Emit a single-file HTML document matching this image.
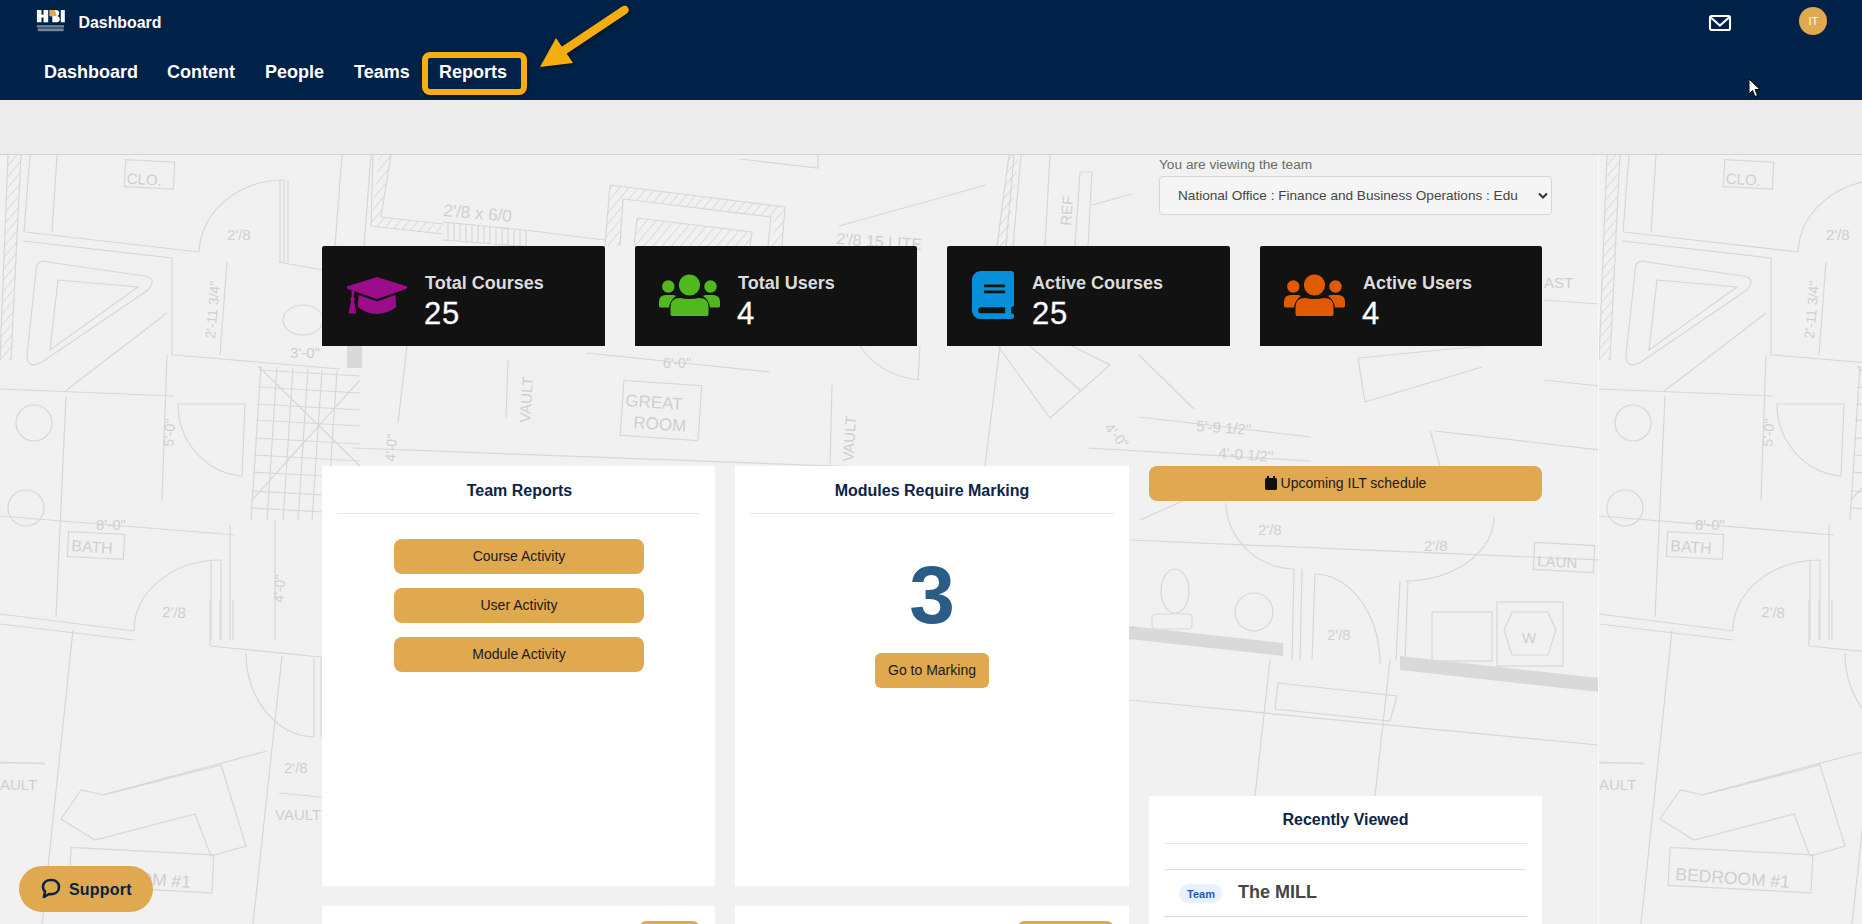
<!DOCTYPE html>
<html><head><meta charset="utf-8">
<style>
*{box-sizing:border-box;margin:0;padding:0}
html,body{width:1862px;height:924px;overflow:hidden}
body{font-family:"Liberation Sans",sans-serif;background:#f1f1f1;position:relative}
.abs{position:absolute}
#nav{left:0;top:0;width:1862px;height:100px;background:#012248}
#band{left:0;top:100px;width:1862px;height:55px;background:#ececec;border-bottom:1px solid #d2d2d2}
.t{position:absolute;white-space:nowrap;line-height:1}
.nv{color:#fff;font-weight:bold;font-size:18px;top:63px}
.card{position:absolute;top:246px;width:283px;height:100px;background:#121212;border-radius:2px 2px 0 0}
.card .ttl{position:absolute;left:103px;top:28px;color:#dcdcdc;font-weight:bold;font-size:18px;line-height:1;white-space:nowrap}
.card .num{position:absolute;left:102px;top:52.3px;color:#fff;font-size:31px;line-height:1;letter-spacing:.8px;-webkit-text-stroke:.3px #fff}
.panel{position:absolute;background:#fff}
.ptitle{position:absolute;left:0;width:100%;text-align:center;color:#0b2447;font-weight:bold;font-size:16px;line-height:1}
.pdiv{position:absolute;height:1px;background:#e6e6e6}
.btn{position:absolute;background:#e0a84f;border-radius:8px;color:#1a1a1a;font-size:14px;text-align:center;line-height:35px}
</style></head><body>
<div id="nav" class="abs"></div>
<div id="band" class="abs"></div>

<!-- background blueprint -->
<svg class="abs" style="left:0;top:0" width="1862" height="924" viewBox="0 0 1862 924">
<defs>
<pattern id="hatch" patternUnits="userSpaceOnUse" width="7" height="7" patternTransform="rotate(40)">
<rect width="7" height="7" fill="none"/><line x1="0" y1="0" x2="0" y2="7" stroke="#d6d6d6" stroke-width="1.6"/>
</pattern>
<clipPath id="tclip"><rect x="0" y="155" width="1599" height="769"/></clipPath>
<g id="tile">
<g stroke="#d7d7d7" stroke-width="1.2" fill="none">
<!-- left strip, top -->
<path d="M8 155 L0 360 M21 155 L11 360"/>
<path d="M30 155 L24 232 M57 155 L52 232"/>
<path d="M25 232 L199 252 M23 241 L172 258"/>
<rect x="125" y="161" width="49" height="27" transform="rotate(3 150 175)"/>
<path d="M199 252 A85 75 0 0 1 284 180 L284 263 M280 180 L280 262 M288 180 L288 262"/>
<path d="M278 262 L340 273"/>
<path d="M48 262 Q36 258 36 272 L27 355 Q27 370 42 362 L148 290 Q158 278 144 276 Z"/>
<path d="M58 280 L138 287 L50 350 Z"/>
<path d="M64 392 L167 313"/>
<path d="M0 389 L174 396"/>
<path d="M172 258 L172 356 M227 262 L220 355"/>
<path d="M174 355 L340 369"/>
<ellipse cx="303" cy="320" rx="20" ry="15"/>
<path d="M167 355 L162 500"/>
<path d="M178 404 A70 72 0 0 0 242 476 L245 404 Z"/>
<circle cx="34" cy="423" r="18"/>
<circle cx="26" cy="508" r="18"/>
<path d="M66 396 L56 617"/>
<path d="M0 516 L235 535"/>
<rect x="68" y="533" width="56" height="25" transform="rotate(3 96 545)"/>
<path d="M0 614 L134 631 M0 624 L134 640"/>
<path d="M134 631 A87 70 0 0 1 221 560 L221 640 M211 560 L211 640 M230 525 L230 640"/>
<path d="M210 646 L340 659 M210 600 L210 646 M220 600 L220 640 M233 600 L233 640"/>
<path d="M73 630 L42 924"/>
<path d="M246 653 A70 84 0 0 0 314 737 L314 658 M321 658 L321 737"/>
<path d="M282 656 L253 924"/>
<path d="M275 520 L275 640"/>
<rect x="70" y="851" width="143" height="38" transform="rotate(3 140 870)"/>
<path d="M61 819 L81 790 L104 795 L221 765 L246 846 L211 856 L195 814 L95 840 Z M102 795 L267 751 M0 763 L44 763 M279 793 L330 798"/>
<path d="M0 762 L45 764"/>
<!-- grid shower -->
<path d="M261 366 L251 520 M277 367 L267 520 M293 368 L283 520 M308 369 L298 520 M322 370 L312 520 M337 371 L327 520"/>
<path d="M259 370 L360 376 M258 387 L360 393 M257 404 L360 410 M256 420 L360 426 M255 438 L360 444 M254 455 L360 461 M253 472 L360 478 M252 491 L360 497 M251 508 L360 514"/>
<path d="M258 366 L360 466 M252 500 L360 380"/>
<!-- middle top -->
<path d="M373 155 L371 226 L443 234 M391 155 L381 217 L443 224"/>
<path d="M342 155 L335 246 M371 155 L364 246"/>
<path d="M443 222 L533 231 L605 240 M443 240 L533 247 M448 223 V240 M454 224 V241 M460 224 V241 M466 225 V242 M472 225 V242 M478 226 V243 M484 226 V243 M490 227 V244 M496 227 V244 M502 228 V245 M508 228 V245 M514 229 V246 M520 229 V246 M526 230 V246"/>
<path d="M610 185 L785 207 L782 246 M605 246 L610 185 M623 199 L771 217 L768 246 M623 199 L620 246"/>
<path d="M637 218 L752 232 L750 246 M637 218 L634 246"/>
<path d="M740 159 L818 168 L818 155"/>

<path d="M839 226 L986 185"/>
<path d="M1009 155 L997 246 M1014 155 L1006 246 M1021 155 L1013 246 M1050 155 L1045 246 M1080 172 L1075 246 M1092 172 L1088 246 M1080 172 L1092 172"/>
<path d="M1092 205 L1132 194"/>
<!-- middle between cards and panels -->
<path d="M407 346 L398 423 M353 448 L940 470"/>
<path d="M508 360 L506 418"/>
<path d="M587 353 L770 372"/>
<rect x="622" y="383" width="78" height="55" transform="rotate(4 661 410)"/>
<path d="M860 346 Q880 376 920 380 M920 346 L918 380"/>
<path d="M832 385 L830 466"/>
<path d="M998 346 L1050 418 L1110 365 L1060 340 M1000 346 L985 466"/>
<path d="M1139 417 L1311 437 M1088 448 L1310 461 M1435 431 L1600 450 M1139 355 L1194 409 M1030 346 L1081 391"/>
<path d="M1358 358 L1482 346 M1365 402 L1482 367 M1358 358 L1365 402"/>
<path d="M1430 430 L1440 466"/>
<!-- right column under ILT button -->
<path d="M1226 503 A70 68 0 0 0 1294 569 M1494 517 A90 64 0 0 1 1405 581"/>
<path d="M1315 574 A66 90 0 0 1 1380 664 M1294 569 L1292 660 M1302 569 L1300 660 M1315 574 L1312 660 M1400 581 L1396 660 M1408 581 L1405 660"/>
<ellipse cx="1175" cy="591" rx="14" ry="22"/>
<rect x="1152" y="614" width="40" height="15" rx="4"/>
<circle cx="1254" cy="612" r="19"/>
<rect x="1534" y="544" width="60" height="27" transform="rotate(3 1564 557)"/>
<rect x="1497" y="602" width="66" height="64"/>
<path d="M1512 612 L1548 612 L1556 630 L1548 655 L1512 655 L1504 630 Z"/>
<rect x="1432" y="612" width="60" height="49"/>
<path d="M1278 683 L1397 696 L1390 721 L1275 709 Z"/>
<path d="M1129 700 L1598 745 M1270 660 L1255 796 M1390 660 L1375 796"/>
<path d="M1140 520 L1185 500 M1130 540 L1600 560"/>
<path d="M1544 300 L1599 304 M1544 380 L1599 386"/>
</g>
<g fill="#d9d9d9">
<path d="M1129 626 L1283 643 L1283 656 L1129 639 Z"/>
<path d="M1400 656 L1599 678 L1599 692 L1400 670 Z"/>
<path d="M347 346 L362 346 L362 368 L347 368 Z"/>
</g>
<g fill="url(#hatch)">
<path d="M8 155 L21 155 L11 360 L0 360 Z"/>
<path d="M379 155 L391 155 L381 217 L443 224 L443 234 L371 226 Z"/>
<path d="M610 185 L785 207 L782 246 L772 246 L775 217 L623 199 L620 246 L605 246 Z"/>
<path d="M637 218 L752 232 L750 246 L634 246 Z"/>
<path d="M1009 155 L1019 155 L1007 246 L997 246 Z"/>

</g>
<g fill="#cfcfcf" font-family="Liberation Sans" font-size="15">
<text x="127" y="185" transform="rotate(3 150 175)">CLO.</text>
<text x="227" y="240">2'/8</text>
<text x="0" y="0" transform="translate(215,339) rotate(-85)" font-size="14">2'-11 3/4"</text>
<text x="0" y="0" transform="translate(162,617) rotate(3)">2'/8</text>
<text x="96" y="530">8'-0"</text>
<text x="0" y="0" transform="translate(71,551) rotate(4)" font-size="16">BATH</text>
<text x="284" y="773">2'/8</text>
<text x="0" y="790">AULT</text>
<text x="275" y="820">VAULT</text>
<text x="0" y="0" transform="translate(76,880) rotate(4)" font-size="17.5">BEDROOM #1</text>
<text x="0" y="0" transform="translate(283,603) rotate(-85)" font-size="14">4'-0"</text>
<text x="0" y="0" transform="translate(173,447) rotate(-85)" font-size="14">5'-0"</text>
<text x="290" y="358">3'-0"</text>
<text x="0" y="0" transform="translate(443,216) rotate(5)" font-size="17">2'/8 x 6/0</text>
<text x="0" y="0" transform="translate(836,244) rotate(4)" font-size="16">2'/8 15 LITE</text>
<text x="0" y="0" transform="translate(1071,226) rotate(-86)" font-size="15">REF</text>
<text x="0" y="0" transform="translate(530,423) rotate(-86)" font-size="15">VAULT</text>
<text x="0" y="0" transform="translate(853,462) rotate(-86)" font-size="15">VAULT</text>
<text x="0" y="0" transform="translate(395,462) rotate(-86)" font-size="14">4'-0"</text>
<text x="663" y="368" font-size="14">6'-0"</text>
<text x="0" y="0" transform="translate(625,406) rotate(4)" font-size="17">GREAT</text>
<text x="0" y="0" transform="translate(633,428) rotate(4)" font-size="17">ROOM</text>
<text x="0" y="0" transform="translate(1196,431) rotate(4)" font-size="15">5'-9 1/2"</text>
<text x="0" y="0" transform="translate(1218,458) rotate(4)" font-size="15">4'-0 1/2"</text>
<text x="1258" y="535">2'/8</text>
<text x="1424" y="551">2'/8</text>
<text x="1327" y="640">2'/8</text>
<text x="0" y="0" transform="translate(1537,566) rotate(3)">LAUN</text>
<text x="1522" y="643">W</text>
<text x="1544" y="288">AST</text>
<text x="0" y="0" transform="translate(1104,428) rotate(50)" font-size="14">4'-0"</text>
</g>
</g>
</defs>
<use href="#tile" clip-path="url(#tclip)"/>
<use href="#tile" transform="translate(1599,0)"/>
<line x1="1598.5" y1="155" x2="1598.5" y2="924" stroke="#fafafa" stroke-width="1"/>
</svg>

<!-- NAV -->
<svg class="abs" style="left:36px;top:10px" width="30" height="22" viewBox="0 0 30 22">
<g fill="#fff">
<rect x="0.9" y="0" width="4.6" height="12.3"/><rect x="7.5" y="0" width="4.7" height="12.3"/><rect x="4" y="4.7" width="5" height="2.8"/>
<path d="M13.7 0 H19.5 Q23.3 0 23.3 3.2 Q23.3 5.3 21.6 6.1 Q23.9 7 23.9 9.2 Q23.9 12.3 20 12.3 H16.3 V6.2 H13.7 Z"/>
<rect x="24.8" y="0" width="4" height="12.3"/>
</g>
<path d="M13.7 0 H19 L20.5 6 H13.7 Z" fill="#e0a84f"/>
<g fill="#fff" opacity=".45">
<rect x="0.8" y="15.2" width="27.3" height="2.3"/><rect x="1.8" y="18.4" width="25.8" height="2.8"/>
</g>
</svg>
<div class="t" style="left:78.5px;top:15px;color:#fff;font-weight:bold;font-size:15.9px">Dashboard</div>
<div class="t nv" style="left:44px">Dashboard</div>
<div class="t nv" style="left:167px">Content</div>
<div class="t nv" style="left:265px">People</div>
<div class="t nv" style="left:354px">Teams</div>
<div class="t nv" style="left:439px">Reports</div>
<div class="abs" style="left:422px;top:52px;width:105px;height:43px;border:6px solid #f6ad10;border-radius:8px;box-shadow:1px 2px 3px rgba(0,0,0,.35)"></div>
<svg class="abs" style="left:530px;top:0;filter:drop-shadow(1px 2px 2px rgba(0,0,0,.45))" width="110" height="80" viewBox="530 0 110 80">
<g filter="">
<line x1="624.5" y1="10" x2="560" y2="53" stroke="#f6ad10" stroke-width="8.5" stroke-linecap="round"/>
<path d="M540 67 L556 38 L573 63 Z" fill="#f6ad10"/>
</g>
</svg>
<!-- mail -->
<svg class="abs" style="left:1708px;top:14px" width="24" height="18" viewBox="0 0 24 18">
<rect x="2" y="2" width="20" height="14" rx="1.5" fill="none" stroke="#fff" stroke-width="2.1"/>
<path d="M2.5 3.2 L11.9 11.5 L21.3 3.2" fill="none" stroke="#fff" stroke-width="2.1"/>
</svg>
<div class="abs" style="left:1799px;top:7px;width:28px;height:28px;border-radius:50%;background:#e0a84f"></div>
<div class="t" style="left:1808.5px;top:16px;color:#fff;font-size:11px">IT</div>
<!-- cursor -->
<svg class="abs" style="left:1748px;top:78px" width="14" height="20" viewBox="0 0 14 20">
<path d="M1 1 L1 16 L4.5 12.5 L7 18.5 L9.5 17.5 L7 11.5 L12 11.5 Z" fill="#fff" stroke="#000" stroke-width="1"/>
</svg>

<!-- team select -->
<div class="t" style="left:1159px;top:158px;color:#6a6a6a;font-size:13.7px">You are viewing the team</div>
<div class="abs" style="left:1159px;top:176px;width:393px;height:39px;background:#f5f5f5;border:1px solid #d6d6d6;border-radius:4px;overflow:hidden">
<div class="t" style="left:18px;top:12px;width:340px;overflow:hidden;color:#454545;font-size:13.6px">National Office : Finance and Business Operations : Education</div>
<svg class="abs" style="left:378px;top:15px" width="10" height="8" viewBox="0 0 10 8"><path d="M1 1.5 L5 5.5 L9 1.5" fill="none" stroke="#333" stroke-width="2"/></svg>
</div>

<!-- stat cards -->
<div class="card" style="left:322px">
<svg class="abs" style="left:24px;top:30.5px" width="62" height="37" viewBox="0 0 61 37" preserveAspectRatio="none">
<path d="M30.5 0 L59 9 Q61.5 10.5 59 12 L30.5 22 L2 12 Q-0.5 10.5 2 9 Z" fill="#9b0d8a"/>
<path d="M12.5 18 L30.5 24.5 L48.5 18 L49.5 30 Q40 37 30.5 37 Q21 37 11.5 30 Z" fill="#9b0d8a"/>
<path d="M5.5 13.5 L8.5 14.5 L7.5 20 L9 22 L8 24 L10 36.5 L2.5 36.5 L5 24 L4 22 L5.5 20 Z" fill="#9b0d8a"/>
</svg>
<div class="ttl">Total Courses</div><div class="num">25</div>
</div>
<div class="card" style="left:635px;width:282px">
<svg class="abs" style="left:24px;top:28px" width="61" height="42" viewBox="0 0 61 42"><use href="#users" fill="#52b81f"/></svg>
<div class="ttl">Total Users</div><div class="num">4</div>
</div>
<div class="card" style="left:947px">
<svg class="abs" style="left:24.7px;top:24.7px" width="42.2" height="48.2" viewBox="0 0 448 512">
<path fill="#0790da" d="M96 0C43 0 0 43 0 96V416c0 53 43 96 96 96H384h32c17.7 0 32-14.3 32-32s-14.3-32-32-32V384c17.7 0 32-14.3 32-32V32c0-17.7-14.3-32-32-32H384 96zm0 384H352v64H96c-17.7 0-32-14.3-32-32s14.3-32 32-32zm32-240H352v28H128zm0 64H352v28H128z"/>
</svg>
<div class="ttl" style="left:85px">Active Courses</div><div class="num" style="left:85px">25</div>
</div>
<div class="card" style="left:1260px;width:282px">
<svg class="abs" style="left:24px;top:28px" width="61" height="42" viewBox="0 0 61 42"><use href="#users" fill="#e05a00"/></svg>
<div class="ttl">Active Users</div><div class="num">4</div>
</div>

<svg width="0" height="0" style="position:absolute">
<defs>
<g id="users">
<circle cx="30.5" cy="11" r="10.6"/>
<circle cx="9.3" cy="12.5" r="6.2"/>
<circle cx="51.5" cy="12.5" r="6.2"/>
<path d="M13 42 Q11.5 42 11.5 40 V33 Q11.5 24 21 24 Q25 25 30.5 25 Q36 25 40 24 Q49.5 24 49.5 33 V40 Q49.5 42 48 42 Z"/>
<path d="M1 33.5 Q0 33.5 0 31.5 V28 Q0 21 7 21 H14 Q15.5 21 17 22 Q11 26 10 33.5 Z"/>
<path d="M60 33.5 Q61 33.5 61 31.5 V28 Q61 21 54 21 H47 Q45.5 21 44 22 Q50 26 51 33.5 Z"/>
</g>
</defs>
</svg>

<!-- panels row -->
<div class="panel" style="left:322px;top:466px;width:393px;height:420px">
<div class="ptitle" style="top:17px;left:1px">Team Reports</div>
<div class="pdiv" style="left:15px;right:15px;top:47px"></div>
<div class="btn" style="left:72px;top:73px;width:250px;height:35px">Course Activity</div>
<div class="btn" style="left:72px;top:122px;width:250px;height:35px">User Activity</div>
<div class="btn" style="left:72px;top:171px;width:250px;height:35px">Module Activity</div>
</div>
<div class="panel" style="left:735px;top:466px;width:394px;height:420px">
<div class="ptitle" style="top:16.5px">Modules Require Marking</div>
<div class="pdiv" style="left:15px;right:15px;top:47px"></div>
<div class="t" style="left:0;width:100%;text-align:center;top:88px;color:#2b5b87;font-weight:bold;font-size:82px">3</div>
<div class="btn" style="left:140px;top:187px;width:114px;height:35px;border-radius:6px">Go to Marking</div>
</div>
<div class="btn" style="left:1149px;top:466px;width:393px;height:35px;line-height:35px">
<svg style="position:relative;top:2px;margin-right:4px" width="12" height="14" viewBox="0 0 12 14"><rect x="2" y="0" width="2" height="3" fill="#111"/><rect x="8" y="0" width="2" height="3" fill="#111"/><rect x="0" y="2" width="12" height="12" rx="1.5" fill="#111"/></svg>Upcoming ILT schedule</div>

<div class="panel" style="left:1149px;top:796px;width:393px;height:140px">
<div class="ptitle" style="top:16px;font-size:16px">Recently Viewed</div>
<div class="pdiv" style="left:15px;right:15px;top:47px"></div>
<div class="abs" style="left:15px;right:15px;top:73px;height:48px;border-top:1px solid #dcdcdc;border-bottom:1px solid #dcdcdc;border-radius:4px 4px 0 0"></div>
<div class="abs" style="left:30px;top:88px;width:43px;height:19px;border-radius:10px;background:#e8f2fd"></div>
<div class="t" style="left:38px;top:93px;color:#1f5bbf;font-weight:bold;font-size:11px">Team</div>
<div class="t" style="left:89px;top:87px;color:#454545;font-weight:bold;font-size:18px">The MILL</div>
</div>

<div class="panel" style="left:322px;top:906px;width:393px;height:40px">
<div class="abs" style="left:318px;top:15px;width:59px;height:20px;border-radius:6px;background:#e0a84f"></div>
</div>
<div class="panel" style="left:735px;top:906px;width:394px;height:40px">
<div class="abs" style="left:283px;top:15px;width:95px;height:20px;border-radius:6px;background:#e0a84f"></div>
</div>

<!-- support -->
<div class="abs" style="left:19px;top:866px;width:134px;height:46px;border-radius:23px;background:#e0a84f"></div>
<svg class="abs" style="left:41px;top:878px" width="20" height="21" viewBox="0 0 20 21">
<path d="M10 2 C5 2 2 5 2 9 C2 11 3 12.5 4 13.5 L3 19 L8 16 C8.5 16.1 9.3 16.2 10 16.2 C15 16.2 18 13 18 9 C18 5 15 2 10 2 Z" fill="none" stroke="#0a2342" stroke-width="2.6" stroke-linejoin="round"/>
</svg>
<div class="t" style="left:69px;top:882px;color:#0a2342;font-weight:bold;font-size:16px;letter-spacing:.2px">Support</div>
</body></html>
